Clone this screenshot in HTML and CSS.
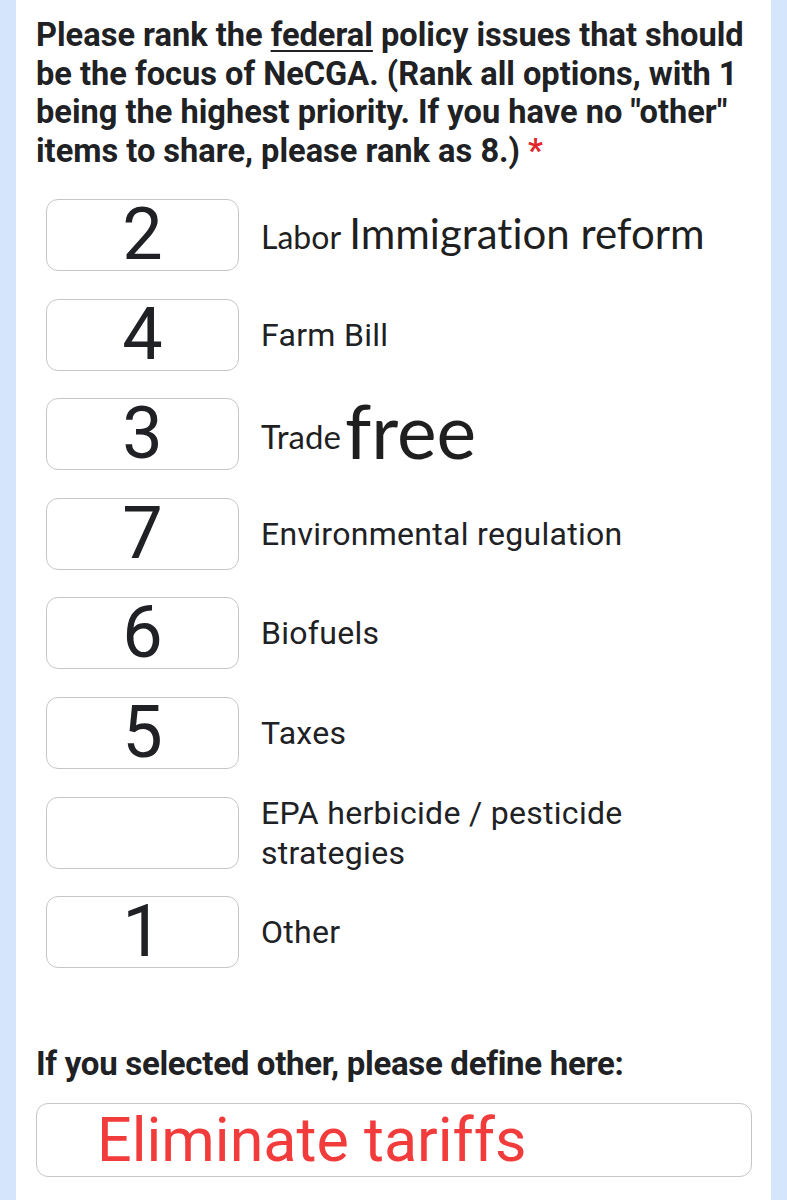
FILE: index.html
```html
<!DOCTYPE html>
<html>
<head>
<meta charset="UTF-8">
<meta name="viewport" content="width=device-width,initial-scale=1.0">
<title>NeCGA federal policy survey</title>
<link rel="stylesheet" href="styles.css">
</head>
<body>
<div class="card">
	<h2 class="question">Please rank the <u>federal</u> policy issues that should be the focus of NeCGA. (Rank all options, with 1 being the highest priority. If you have no "other" items to share, please rank as 8.) <span class="req">*</span></h2>

	<ul class="rank-list">
		<li class="rank-item">
			<div class="rank-box">2</div>
			<div class="rank-label"><span class="alt alt-sm">Labor</span> <span class="alt alt-md">Immigration reform</span></div>
		</li>
		<li class="rank-item">
			<div class="rank-box">4</div>
			<div class="rank-label">Farm Bill</div>
		</li>
		<li class="rank-item">
			<div class="rank-box">3</div>
			<div class="rank-label"><span class="alt alt-xs">Trade</span><span class="alt alt-lg">free</span></div>
		</li>
		<li class="rank-item">
			<div class="rank-box">7</div>
			<div class="rank-label">Environmental regulation</div>
		</li>
		<li class="rank-item">
			<div class="rank-box">6</div>
			<div class="rank-label">Biofuels</div>
		</li>
		<li class="rank-item">
			<div class="rank-box">5</div>
			<div class="rank-label">Taxes</div>
		</li>
		<li class="rank-item">
			<div class="rank-box"></div>
			<div class="rank-label">EPA herbicide / pesticide strategies</div>
		</li>
		<li class="rank-item">
			<div class="rank-box">1</div>
			<div class="rank-label">Other</div>
		</li>
	</ul>

	<h3 class="other-title">If you selected other, please define here:</h3>
	<div class="other-input">Eliminate tariffs</div>
</div>
</body>
</html>
```

FILE: styles.css
```css
body,h2,h3,ul,li,p{margin:0;padding:0;}
ul,li{list-style:none;}

html,body{
	background:#d5e5fb;
	font-family:Roboto,"Liberation Sans",Arial,sans-serif;
	color:#202124;
}
body{
	padding:0 16px;
	min-height:1200px;
}

.card{
	background:#fff;
	min-height:1200px;
	padding:16px 19px 40px 20px;
}

.question{
	font-size:32.6px;
	font-weight:700;
	line-height:38.5px;
	color:#202124;
}
.question u{
	text-decoration-thickness:2px;
	text-underline-offset:4px;
}
.req{
	color:#e3262b;
}

.rank-list{
	margin:29px 0 0 10px;
	display:flex;
	flex-direction:column;
	gap:27.6px;
}
.rank-item{
	height:72px;
	display:flex;
	align-items:center;
	gap:22px;
}
.rank-box{
	flex:0 0 auto;
	width:191px;
	height:70px;
	border:1px solid #c6c6c6;
	border-radius:12px;
	display:flex;
	align-items:center;
	justify-content:center;
	font-size:72px;
	font-weight:400;
	color:#202124;
	line-height:1;
}
.rank-label{
	font-size:32px;
	letter-spacing:0.3px;
	line-height:40px;
	color:#202124;
	max-width:470px;
}

.alt{
	font-family:Lato,"Open Sans",sans-serif;
	font-variant-ligatures:none;
	letter-spacing:0;
	color:#1f1f1f;
}
.alt-sm{font-size:32px;}
.alt-md{font-size:42px;}
.alt-xs{font-size:33px;}
.alt-lg{
	font-size:75px;
	line-height:40px;
	vertical-align:-10px;
	margin-left:4px;
}

.other-title{
	margin-top:77px;
	font-size:33px;
	font-weight:700;
	line-height:38px;
	letter-spacing:-0.3px;
}
.other-input{
	margin-top:20px;
	height:72px;
	border:1px solid #c6c6c6;
	border-radius:12px;
	padding-left:60px;
	font-size:61px;
	line-height:72px;
	color:#f23b3b;
}
```
